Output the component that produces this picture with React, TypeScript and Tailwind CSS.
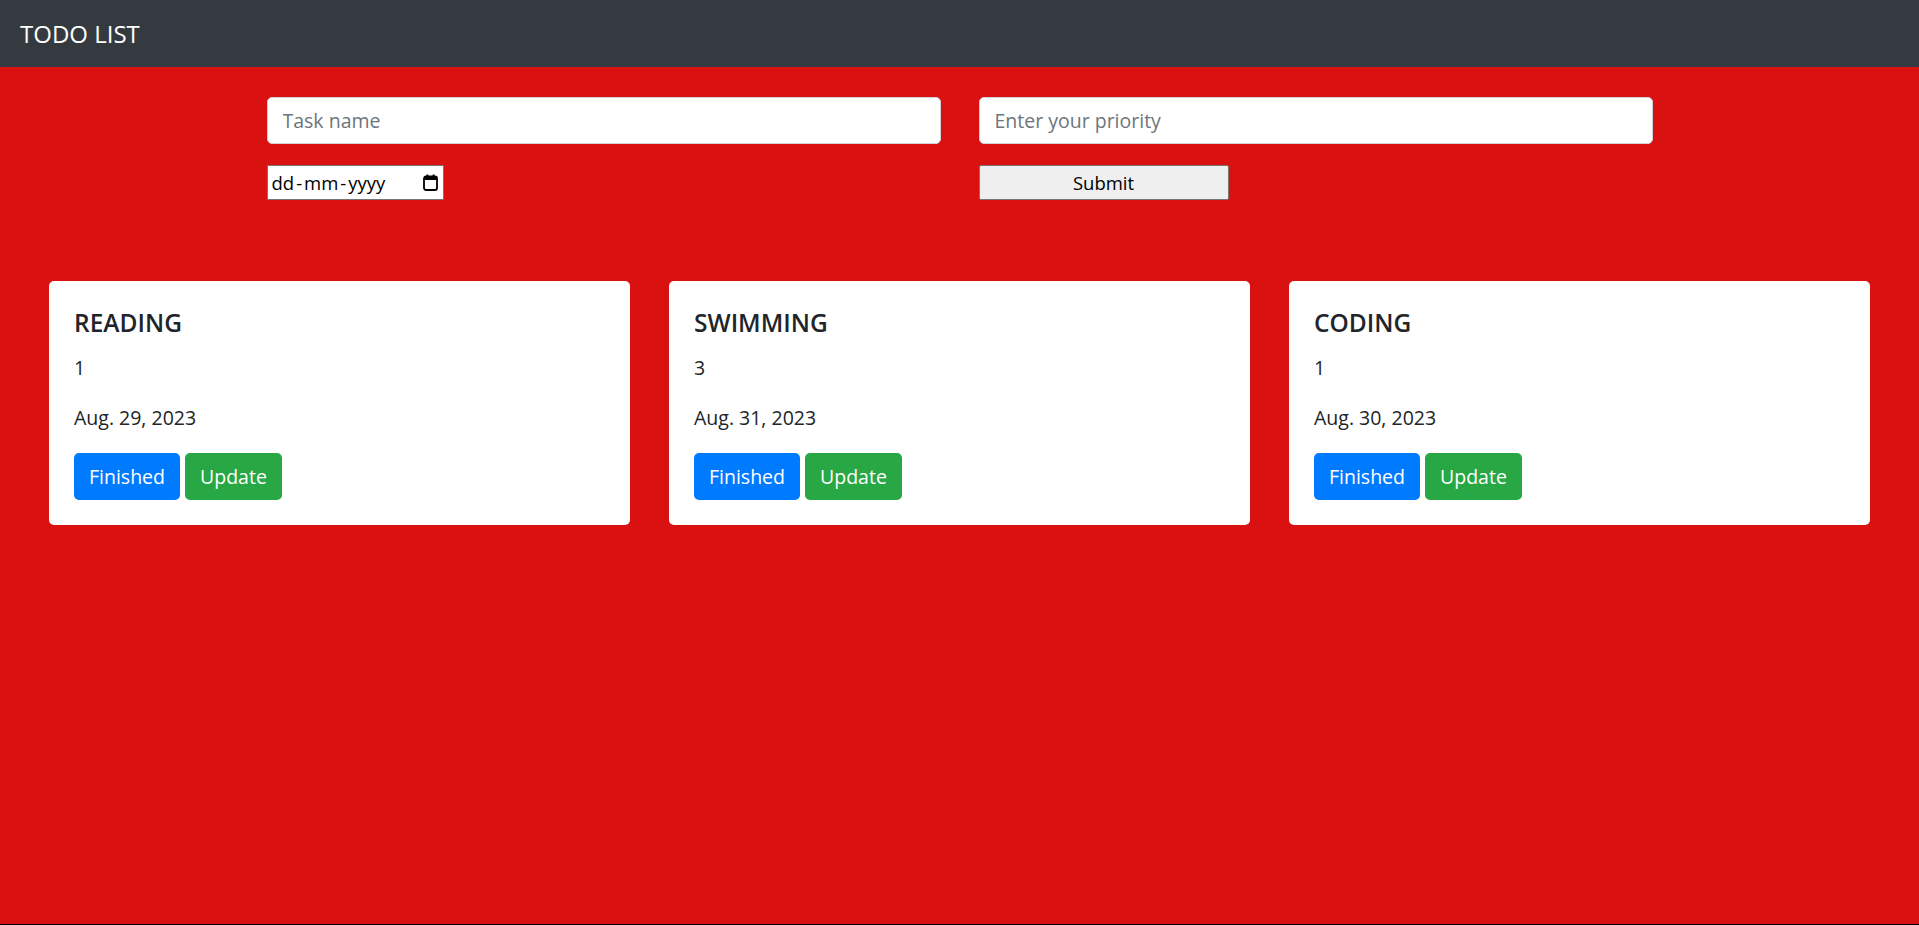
import React from "react";

type Task = { name: string; priority: number; date: string };

const tasks: Task[] = [
  { name: "READING", priority: 1, date: "Aug. 29, 2023" },
  { name: "SWIMMING", priority: 3, date: "Aug. 31, 2023" },
  { name: "CODING", priority: 1, date: "Aug. 30, 2023" },
];

function CalendarIcon() {
  return (
    <svg width="15" height="17" viewBox="0 0 15 17" fill="none">
      <rect x="1" y="2.5" width="13" height="13.5" rx="2" stroke="#000" strokeWidth="1.8" />
      <rect x="1" y="2.5" width="13" height="3.5" fill="#000" />
      <rect x="3.5" y="0.5" width="1.8" height="3" fill="#000" />
      <rect x="9.7" y="0.5" width="1.8" height="3" fill="#000" />
    </svg>
  );
}

export default function App() {
  return (
    <div className="min-h-[925px] bg-[#da1111] border-b border-black font-['Open_Sans',sans-serif] text-[#212529]">
      {/* Navbar */}
      <nav className="h-[67px] bg-[#343a40] flex items-center px-[20px]">
        <span className="text-white text-[24px] leading-none">TODO LIST</span>
      </nav>

      {/* Form */}
      <form className="w-[1386px] mx-auto mt-[30px] grid grid-cols-2 gap-x-[38px] gap-y-[21px]">
        <input
          type="text"
          placeholder="Task name"
          className="h-[47px] w-full bg-white border border-[#ced4da] rounded-[5px] px-[15px] text-[19.5px] placeholder:text-[#6c757d] focus:outline-none"
        />
        <input
          type="text"
          placeholder="Enter your priority"
          className="h-[47px] w-full bg-white border border-[#ced4da] rounded-[5px] px-[15px] text-[19.5px] placeholder:text-[#6c757d] focus:outline-none"
        />
        <div>
          <div className="w-[177px] h-[35px] bg-white border border-[#767676] flex items-center justify-between pl-[4px] pr-[5px] text-[18.5px] text-black">
            <span>
              dd<span className="mx-[2px]">-</span>mm<span className="mx-[2px]">-</span>yyyy
            </span>
            <CalendarIcon />
          </div>
        </div>
        <div>
          <button
            type="button"
            className="w-[250px] h-[35px] bg-[#efefef] border border-[#767676] rounded-[2px] text-[18.5px] text-black"
          >
            Submit
          </button>
        </div>
      </form>

      {/* Cards */}
      <div className="mt-[81px] px-[49px] grid grid-cols-3 gap-x-[39px]">
        {tasks.map((t) => (
          <div key={t.name} className="bg-white rounded-[5px] p-[25px]">
            <h5 className="text-[24.5px] leading-[30px] font-semibold mb-[15px] pt-[2px]">{t.name}</h5>
            <p className="text-[19.5px] leading-[30px] mb-[20px]">{t.priority}</p>
            <p className="text-[19.5px] leading-[30px] mb-[20px]">{t.date}</p>
            <div className="flex gap-[5px]">
              <button className="h-[47px] px-[15px] bg-[#007bff] text-white text-[19.5px] rounded-[5px]">Finished</button>
              <button className="h-[47px] px-[15px] bg-[#28a745] text-white text-[19.5px] rounded-[5px]">Update</button>
            </div>
          </div>
        ))}
      </div>
    </div>
  );
}
